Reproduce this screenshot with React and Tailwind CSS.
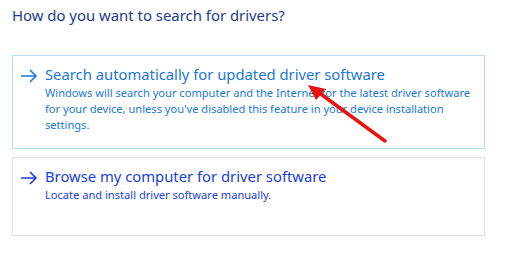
import React from 'react';

const font = { fontFamily: '"Noto Sans", "Open Sans", sans-serif' };

function Arrow({ color }) {
  return (
    <svg width="18" height="14" viewBox="0 0 18 14" className="shrink-0 mt-[5px]">
      <path d="M1 7 H16 M10 1 L16 7 L10 13" fill="none" stroke={color} strokeWidth="1.6" />
    </svg>
  );
}

function Option({ title, desc, border, textColor, color, height }) {
  return (
    <div className={`border ${border} ${height} flex gap-[7px] pl-[7px] pt-[8px]`}>
      <Arrow color={color} />
      <div className={textColor}>
        <div className="text-[14.8px] leading-[21px] whitespace-nowrap">{title}</div>
        <div className="text-[11.1px] leading-[16px] whitespace-nowrap">{desc}</div>
      </div>
    </div>
  );
}

export default function App() {
  return (
    <div className="relative w-[509px] h-[253px] bg-white pl-[12px] pr-[24px]" style={font}>
      <h1 className="text-[14.9px] leading-[20px] pt-[5px] text-[#1e3a8c] font-normal">
        How do you want to search for drivers?
      </h1>
      <div className="mt-[30px] flex flex-col gap-[8px]">
        <Option
          title="Search automatically for updated driver software"
          desc={
            <>
              Windows will search your computer and the Internet for the latest driver software
              <br />
              for your device, unless you've disabled this feature in your device installation
              <br />
              settings.
            </>
          }
          border="border-[#b9dcf6]"
          textColor="text-[#1a78d8]"
          color="#1a78d8"
          height="h-[94px]"
        />
        <Option
          title="Browse my computer for driver software"
          desc="Locate and install driver software manually."
          border="border-[#e1e1e1]"
          textColor="text-[#1a3ee0]"
          color="#1a3ee0"
          height="h-[79px]"
        />
      </div>
      {/* red annotation arrow */}
      <svg className="absolute left-0 top-0 pointer-events-none" width="509" height="253">
        <line x1="385" y1="141" x2="318" y2="92" stroke="#e8150f" strokeWidth="3.5" strokeLinecap="round" />
        <polygon points="308,85 326,89 316,100" fill="#e8150f" />
      </svg>
    </div>
  );
}
